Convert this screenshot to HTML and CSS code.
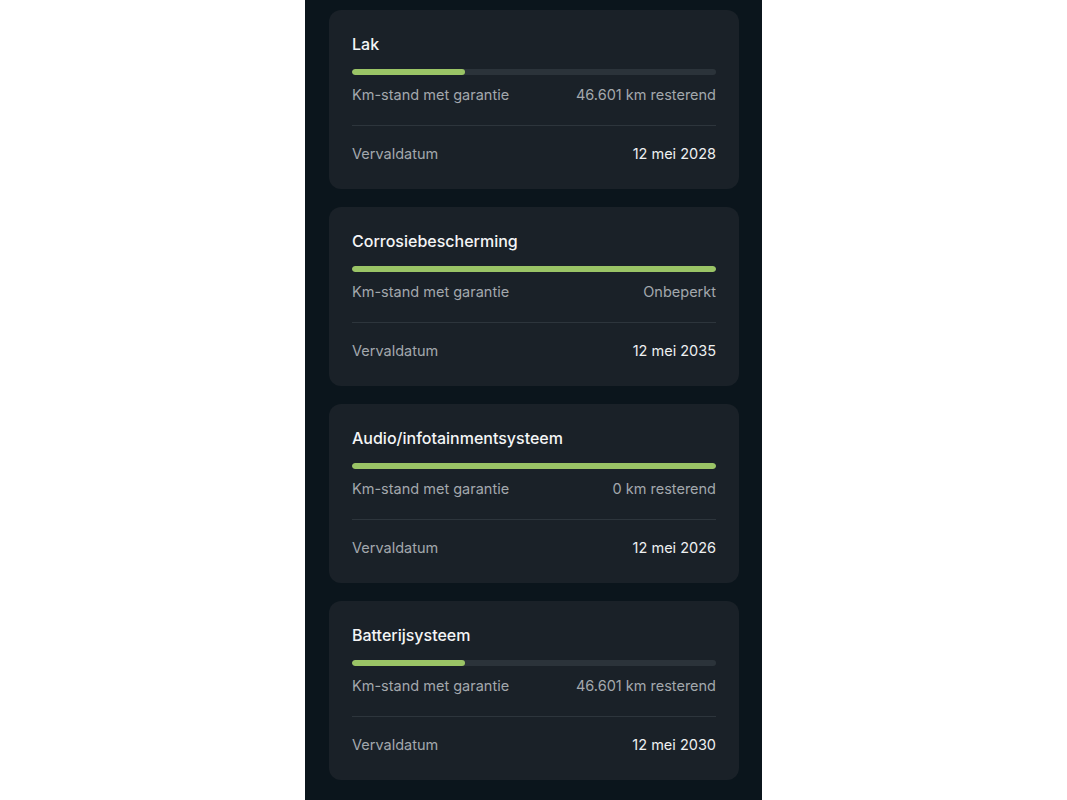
FILE: index.html
```html
<!DOCTYPE html>
<html lang="nl">
<head>
    <meta charset="utf-8">
    <title>Garantie</title>
    <link rel="stylesheet" href="styles.css">
</head>
<body>
    <div class="screen">
        <div class="card">
            <div class="card-title">Lak</div>
            <div class="bar"><div class="bar-fill" style="width: 31%;"></div></div>
            <div class="row">
                <span class="label">Km-stand met garantie</span>
                <span class="value muted">46.601 km resterend</span>
            </div>
            <div class="divider"></div>
            <div class="row row-date">
                <span class="label">Vervaldatum</span>
                <span class="value">12 mei 2028</span>
            </div>
        </div>
        <div class="card">
            <div class="card-title">Corrosiebescherming</div>
            <div class="bar"><div class="bar-fill" style="width: 100%;"></div></div>
            <div class="row">
                <span class="label">Km-stand met garantie</span>
                <span class="value muted">Onbeperkt</span>
            </div>
            <div class="divider"></div>
            <div class="row row-date">
                <span class="label">Vervaldatum</span>
                <span class="value">12 mei 2035</span>
            </div>
        </div>
        <div class="card">
            <div class="card-title">Audio/infotainmentsysteem</div>
            <div class="bar"><div class="bar-fill" style="width: 100%;"></div></div>
            <div class="row">
                <span class="label">Km-stand met garantie</span>
                <span class="value muted">0 km resterend</span>
            </div>
            <div class="divider"></div>
            <div class="row row-date">
                <span class="label">Vervaldatum</span>
                <span class="value">12 mei 2026</span>
            </div>
        </div>
        <div class="card">
            <div class="card-title">Batterijsysteem</div>
            <div class="bar"><div class="bar-fill" style="width: 31%;"></div></div>
            <div class="row">
                <span class="label">Km-stand met garantie</span>
                <span class="value muted">46.601 km resterend</span>
            </div>
            <div class="divider"></div>
            <div class="row row-date">
                <span class="label">Vervaldatum</span>
                <span class="value">12 mei 2030</span>
            </div>
        </div>
    </div>
</body>
</html>
```

FILE: styles.css
```css
html, body {
    margin: 0;
    padding: 0;
    background: #fff;
}
body {
    font-family: Inter, "Noto Sans", sans-serif;
    display: flex;
    justify-content: center;
}
.screen {
    width: 457px;
    height: 800px;
    box-sizing: border-box;
    padding: 10px 23px 0 24px;
    background: #0b151c;
    display: flex;
    flex-direction: column;
    gap: 18px;
    overflow: hidden;
}
.card {
    background: #1a2128;
    border-radius: 12px;
    padding: 24px 23px 25px 23px;
}
.card-title {
    font-size: 16px;
    line-height: 20px;
    font-weight: 500;
    color: #f4f5f6;
}
.bar {
    margin-top: 15px;
    height: 6px;
    border-radius: 3px;
    background: #2b333a;
    overflow: hidden;
}
.bar-fill {
    height: 100%;
    border-radius: 3px;
    background: #9ac466;
}
.row {
    margin-top: 10px;
    display: flex;
    justify-content: space-between;
    font-size: 14.5px;
    line-height: 20px;
}
.label {
    color: #a3a8ad;
}
.value {
    color: #eef0f1;
}
.value.muted {
    color: #a3a8ad;
}
.divider {
    margin-top: 20px;
    height: 1px;
    background: #2d353c;
}
.row-date {
    margin-top: 18px;
}
```
